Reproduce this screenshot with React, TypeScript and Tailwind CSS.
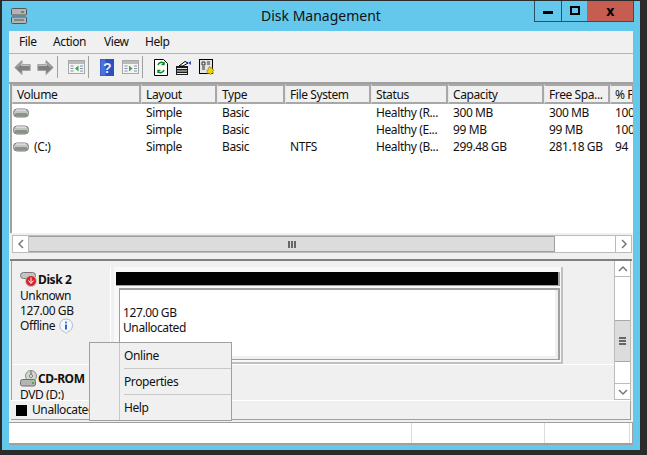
const columns = [
  { label: "Volume", width: "w-[129px]" },
  { label: "Layout", width: "w-[76px]" },
  { label: "Type", width: "w-[68px]" },
  { label: "File System", width: "w-[86px]" },
  { label: "Status", width: "w-[77px]" },
  { label: "Capacity", width: "w-[96px]" },
  { label: "Free Spa...", width: "w-[66px]" },
  { label: "% F", width: "w-[24px]" },
];

const rows = [
  ["", "Simple", "Basic", "", "Healthy (R...", "300 MB", "300 MB", "100"],
  ["", "Simple", "Basic", "", "Healthy (E...", "99 MB", "99 MB", "100"],
  ["(C:)", "Simple", "Basic", "NTFS", "Healthy (B...", "299.48 GB", "281.18 GB", "94"],
];

function HddIcon() {
  return (
    <svg width="16" height="10" viewBox="0 0 16 10" className="shrink-0">
      <rect x="0.5" y="1" width="15" height="8" rx="3.5" fill="#c4c4c4" stroke="#7c7c7c" />
      <path d="M3 2h10" stroke="#efefef" />
      <rect x="1.5" y="5" width="13" height="3.5" rx="1.7" fill="#8f8f8f" />
      <rect x="11.5" y="5.5" width="2" height="2" fill="#58b848" />
    </svg>
  );
}

function Arrow({ flip }: { flip?: boolean }) {
  return (
    <svg width="17" height="17" viewBox="0 0 17 17" className={flip ? "-scale-x-100" : ""}>
      <path d="M.8 8.5 8 1.5V5.5H16.2V11.5H8V15.5Z" fill="#7f7f7f" stroke="#a4a4a4" />
      <path d="M3 8.5 7.5 4v2.5h8" fill="none" stroke="#c4c4c4" />
    </svg>
  );
}

function PaneIcon({ right }: { right?: boolean }) {
  return (
    <svg width="17" height="14" viewBox="0 0 17 14">
      <rect x="0.5" y="0.5" width="16" height="13" fill="#f4f4f4" stroke="#a8a8a8" />
      <rect x="1" y="1" width="15" height="3" fill="#b9b9b9" />
      <path d="M2.5 6h3M2.5 8.5h3M2.5 11h3M12 6h3M12 8.5h3M12 11h3" stroke="#7f93a8" />
      {right ? <path d="M7 5.5v6l3.5-3Z" fill="#3aa845" /> : <path d="M10.5 5.5v6l-3.5-3Z" fill="#3aa845" />}
    </svg>
  );
}

function Toolbar() {
  return (
    <div className="flex h-[30px] items-center border-b-2 border-[#a0a0a0] pb-[2px] pl-[5px]">
      <div className="flex gap-[6px]">
        <Arrow />
        <Arrow flip />
      </div>
      <div className="ml-[3px] h-[22px] w-px bg-[#a0a0a0]" />
      <div className="ml-[10px]">
        <PaneIcon />
      </div>
      <div className="ml-[3px] h-[22px] w-px bg-[#a0a0a0]" />
      <svg width="14" height="17" viewBox="0 0 14 17" className="ml-[11px]">
        <rect width="14" height="17" fill="#2b50c0" />
        <rect x="0.5" y="0.5" width="5" height="16" fill="#4a70dc" />
        <text x="7" y="14" textAnchor="middle" fontSize="14" fontWeight="700" fontFamily="Liberation Sans" fill="#e8eefc">?</text>
      </svg>
      <div className="ml-[8px]">
        <PaneIcon right />
      </div>
      <div className="ml-[3px] h-[22px] w-px bg-[#a0a0a0]" />
      <svg width="14" height="17" viewBox="0 0 14 17" className="ml-[11px]">
        <path d="M.5.5h9l4 4v12H.5Z" fill="#fff" stroke="#000" />
        <path d="M4 6a3.5 3.5 0 0 1 6-1.5M10 3v2.5H7.5M10 11a3.5 3.5 0 0 1-6 1.5M4 14v-2.5h2.5" fill="none" stroke="#0a8a1e" strokeWidth="1.5" />
      </svg>
      <svg width="16" height="15" viewBox="0 0 16 15" className="ml-[8px]">
        <path d="M0 6h12v9H0Z" fill="#1c1c1c" />
        <path d="M1 8.5h10M1 11h10M1 13.5h10" stroke="#e8e8e8" />
        <path d="M3 6 9 1.5l3 1.5-5 3Z" fill="#fff" stroke="#000" />
        <path d="M12 3 15 1v4Z" fill="#2b50c0" />
      </svg>
      <svg width="16" height="16" viewBox="0 0 16 16" className="ml-[7px]">
        <rect x="0.5" y="0.5" width="13" height="14" fill="#e4e4e4" stroke="#000" />
        <path d="M3 3h3v3H3ZM8 3h3M8 5h3M3 8h3M3 10h3" stroke="#333" fill="none" />
        <path d="M10.5 7.5l1 1.5 1.7-.6.2 1.8 1.6.9-1.2 1.4.6 1.7-1.8.1-1 1.4-1.2-1.2-1.8.3.2-1.8-1.3-1.2 1.6-.8.3-1.8Z" fill="#f4d20c" stroke="#6b5a00" strokeWidth="0.5" />
      </svg>
    </div>
  );
}

function VolumeList() {
  return (
    <div className="ml-px h-[149px] w-[623px] overflow-hidden border-l-2 border-[#a0a0a0] bg-white">
      <div className="flex h-[20px]">
        {columns.map((col) => (
          <div
            key={col.label}
            className={`${col.width} shrink-0 overflow-hidden whitespace-nowrap border-y-2 border-r-2 border-l border-[#a8a8a8] border-l-[#e8e8e8] bg-[#f0f0f0] pl-[4px] leading-[18px]`}
          >
            {col.label}
          </div>
        ))}
      </div>
      {rows.map((row, i) => (
        <div key={i} className="flex h-[17px] leading-[17px]">
          {row.map((cell, j) => (
            <div
              key={j}
              className={`${columns[j].width} flex shrink-0 items-center overflow-hidden whitespace-nowrap ${j === 0 ? "pl-[1px]" : "pl-[5px]"}`}
            >
              {j === 0 && <HddIcon />}
              {j === 0 && cell && <span className="ml-[5px]">{cell}</span>}
              {j > 0 && cell}
            </div>
          ))}
        </div>
      ))}
    </div>
  );
}

function Chevron({ d }: { d: string }) {
  return (
    <svg width="10" height="10" viewBox="0 0 10 10">
      <path d={d} fill="none" stroke="#777" strokeWidth="1.5" />
    </svg>
  );
}

function HScrollbar() {
  return (
    <div className="ml-[3px] mt-[2px] flex h-[18px] w-[620px] border border-[#bcbcbc] bg-white">
      <div className="flex w-[16px] items-center justify-center border-r border-[#bcbcbc]">
        <Chevron d="M7 1 3 5l4 4" />
      </div>
      <div className="flex w-[526px] items-center justify-center border-y border-r border-[#a0a0a0] bg-[#dcdcdc]">
        <div className="flex gap-px">
          <div className="h-[7px] w-[2px] bg-[#666]" />
          <div className="h-[7px] w-[2px] bg-[#666]" />
          <div className="h-[7px] w-[2px] bg-[#666]" />
        </div>
      </div>
      <div className="flex-1" />
      <div className="flex w-[16px] items-center justify-center border-l border-[#bcbcbc]">
        <Chevron d="M3 1l4 4-4 4" />
      </div>
    </div>
  );
}

function VScrollbar() {
  return (
    <div className="flex h-[139px] w-[17px] shrink-0 flex-col border-x border-b border-[#bcbcbc] bg-white">
      <div className="flex h-[16px] items-center justify-center border-b border-[#bcbcbc]">
        <Chevron d="M1 7l4-4 4 4" />
      </div>
      <div className="mt-[43px] flex h-[42px] flex-col items-center justify-center gap-px border-y border-[#a8a8a8] bg-[#dcdcdc]">
        <div className="h-[2px] w-[7px] bg-[#666]" />
        <div className="h-[2px] w-[7px] bg-[#666]" />
        <div className="h-[2px] w-[7px] bg-[#666]" />
      </div>
      <div className="flex-1" />
      <div className="flex h-[16px] items-center justify-center border-t border-[#bcbcbc]">
        <Chevron d="M1 3l4 4 4-4" />
      </div>
    </div>
  );
}

function OfflineDiskIcon() {
  return (
    <svg width="18" height="15" viewBox="0 0 18 15" className="shrink-0">
      <rect x="0.5" y="0.5" width="15" height="6" rx="3" fill="#c4c4c4" stroke="#777" />
      <circle cx="11" cy="9" r="5.5" fill="#d8232a" stroke="#c8c8c8" />
      <path d="M11 5.5v5M8.5 8.5 11 11.5l2.5-3" stroke="#fff" fill="none" />
    </svg>
  );
}

function CdIcon() {
  return (
    <svg width="18" height="17" viewBox="0 0 18 17" className="shrink-0">
      <circle cx="11" cy="6" r="5.5" fill="#d4d4d4" stroke="#8c8c8c" />
      <circle cx="11" cy="6" r="1.5" fill="#fff" stroke="#777" />
      <path d="M10 1h2v3h-2Z" fill="#6cbf60" />
      <rect x="0.5" y="9.5" width="15" height="6.5" rx="2" fill="#b4b4b4" stroke="#6f6f6f" />
      <rect x="12" y="12" width="2" height="2" fill="#4caf3a" />
    </svg>
  );
}

function DiskPane() {
  return (
    <div className="relative flex h-[139px] w-[620px] border-l border-[#a0a0a0] bg-[#f0f0f0]">
      <div className="w-[603px] overflow-hidden">
        <div className="flex h-[104px] border-b border-white pl-px pt-[6px]">
          <div className="h-[97px] w-[98px] border-r border-white pl-[7px] pt-[5px] leading-[15px]">
            <div className="flex h-[15px] items-center">
              <OfflineDiskIcon />
              <span className="font-bold">Disk 2</span>
            </div>
            <div className="mt-[1px]">Unknown</div>
            <div>127.00 GB</div>
            <div className="flex h-[15px] items-center">
              Offline
              <svg width="16" height="16" viewBox="0 0 16 16" className="ml-[3px]">
                <path d="M8 1a6.5 6.5 0 0 1 2 12.7L8 15.5l-1.6-1.8A6.5 6.5 0 0 1 8 1Z" fill="#f4f7fb" stroke="#b4bcc6" />
                <circle cx="8" cy="4.5" r="1" fill="#2b6cc8" />
                <path d="M8 6.5v5" stroke="#2b6cc8" strokeWidth="2" />
              </svg>
            </div>
          </div>
          <div className="ml-[3px] h-[97px] w-[449px] border-b-2 border-r-2 border-[#c0c0c0] bg-[#f8f8f8]">
            <div className="ml-[2px] mt-[5px] h-[14px] w-[444px] border-b border-r-2 border-[#a0a0a0] bg-black" />
            <div className="ml-[5px] mt-[2px] h-[72px] w-[441px] border-b border-l border-r-2 border-t-2 border-[#a0a0a0] bg-white pl-[3px] pt-[15px] leading-[15px] shadow-[inset_-3px_-3px_0_#f0f0f0]">
              <div>127.00 GB</div>
              <div>Unallocated</div>
            </div>
          </div>
        </div>
        <div className="pl-[8px] pt-[6px] leading-[15px]">
          <div className="flex h-[15px] items-center">
            <CdIcon />
            <span className="font-bold">CD-ROM</span>
          </div>
          <div className="mt-[1px]">DVD (D:)</div>
        </div>
      </div>
      <VScrollbar />
    </div>
  );
}

function ContextMenu() {
  return (
    <div className="absolute left-[80px] top-[311px] w-[143px] border border-[#a0a0a0] bg-[#f0f0f0]">
      <div className="ml-[29px] border-l border-[#c8c8c8] pl-[4px] leading-[25px]">
        <div className="h-[26px] border-b border-[#c8c8c8]">Online</div>
        <div className="h-[26px] border-b border-[#c8c8c8]">Properties</div>
        <div className="h-[25px]">Help</div>
      </div>
    </div>
  );
}

export default function App() {
  return (
    <div className="h-[455px] w-[647px] overflow-hidden bg-[#2b2b2b] pl-[2px] pt-px font-['Noto_Sans',sans-serif] text-[12px] tracking-[-0.4px] text-[#111]">
      <div className="flex h-[449px] w-[638px] flex-col bg-[#63c8ec] pl-[7px]">
        <div className="flex h-[30px] w-[625px] shrink-0 items-start">
          <svg width="16" height="16" viewBox="0 0 16 16" className="mt-[7px] ml-[2px] shrink-0">
            <rect x="0.5" y="0.5" width="15" height="6.5" rx="1" fill="#b4b4b4" stroke="#555" />
            <rect x="0.5" y="9" width="15" height="6.5" rx="1" fill="#b4b4b4" stroke="#555" />
            <rect x="10" y="3" width="3" height="2" fill="#3aa845" />
            <path d="M3 12h10" stroke="#555" />
          </svg>
          <div className="ml-[234px] mt-[4px] whitespace-nowrap text-[14px] tracking-normal leading-[22px]">Disk Management</div>
          <div className="ml-auto flex h-[21px] border border-t-0 border-[#2f4f63]">
            <div className="flex w-[27px] items-center justify-center border-r border-[#2f4f63]">
              <div className="mt-[3px] h-[3px] w-[10px] bg-black" />
            </div>
            <div className="flex w-[25px] items-center justify-center">
              <div className="mb-[1px] h-[9px] w-[10px] border-2 border-black" />
            </div>
            <div className="flex w-[46px] items-center justify-center bg-[#c75c50] pb-[1px] text-[14px] font-bold leading-none text-black">
              x
            </div>
          </div>
        </div>
        <div className="relative h-[413px] w-[624px] bg-[#f0f0f0]">
          <div className="flex h-[23px] items-center border-b border-[#b4b4c0] pl-[10px]">
            <span className="w-[34px]">File</span>
            <span className="w-[51px]">Action</span>
            <span className="w-[41px]">View</span>
            <span>Help</span>
          </div>
          <Toolbar />
          <VolumeList />
          <HScrollbar />
          <div className="ml-px mt-[2px] h-[6px] w-[622px] border-b-2 border-[#808080] bg-[#f0f0f0]" />
          <div className="ml-[2px]">
            <DiskPane />
          </div>
          <div className="ml-[2px] flex h-[20px] w-[620px] items-center border-b border-r border-t border-[#a0a0a0] border-t-white pl-[5px]">
            <div className="h-[11px] w-[11px] bg-black" />
            <span className="ml-[5px]">Unallocated</span>
          </div>
          <div className="mt-[2px] flex h-[23px] w-[624px] border-y border-r border-[#a0a0a0] border-b-2 bg-white">
            <div className="w-[403px] border-r border-[#dcdcdc]" />
            <div className="w-[133px] border-r border-[#dcdcdc]" />
            <div className="w-[85px] border-r border-[#dcdcdc]" />
          </div>
          <ContextMenu />
        </div>
      </div>
    </div>
  );
}
